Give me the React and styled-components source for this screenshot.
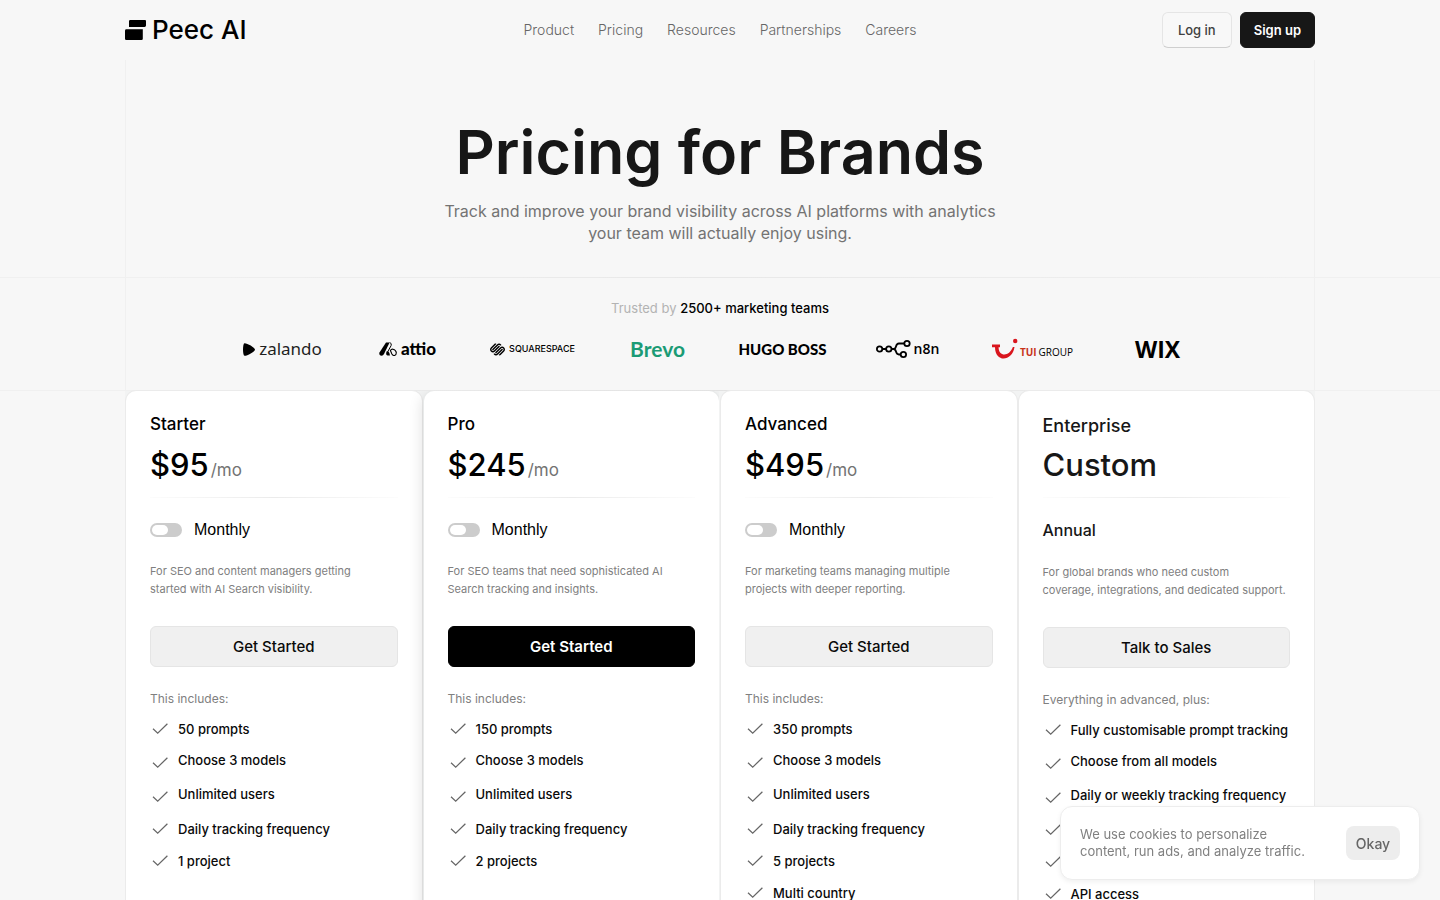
import React from 'react'
import styled, { createGlobalStyle, css } from 'styled-components'
import { SiSquarespace } from 'react-icons/si'

const GlobalStyle = createGlobalStyle`
	* {
		box-sizing: border-box;
	}
	body {
		margin: 0;
		background: #f7f7f7;
		color: #171717;
		font-family: Inter, 'Liberation Sans', sans-serif;
	}
	button {
		font-family: inherit;
		cursor: pointer;
	}
	h1, h2, p, ul {
		margin: 0;
		padding: 0;
		font-weight: inherit;
	}
`

const Page = styled.div`
	height: 100vh;
	overflow: hidden;
`
const Container = styled.div`
	max-width: 1190px;
	margin: 0 auto;
`
const Header = styled(Container)`
	display: grid;
	grid-template-columns: 1fr auto 1fr;
	align-items: center;
	height: 60px;
`
const Brand = styled.a`
	display: flex;
	align-items: center;
	gap: 6px;
	color: #000;
	font-size: 26px;
	font-weight: 500;
	line-height: 32px;
	text-decoration: none;
	white-space: nowrap;
`
const Nav = styled.nav`
	display: flex;
	gap: 24px;
`
const NavLink = styled.a`
	color: #666;
	font-size: 14px;
	font-weight: 300;
	line-height: 20px;
	text-decoration: none;
`
const Actions = styled.div`
	display: flex;
	justify-content: flex-end;
	gap: 8px;
`
const HeaderButton = styled.button`
	height: 36px;
	padding: 0 15px;
	border: 1px solid #e5e5e5;
	border-bottom-color: #cfcfcf;
	border-radius: 6px;
	background: #f8f8f8;
	color: #404040;
	font-size: 13px;
	font-weight: 500;
	${(props) =>
		props.$primary &&
		css`
			padding: 0 13px;
			border-color: #171717;
			background: #171717;
			color: #fff;
			font-weight: 600;
		`}
`
const Frame = styled(Container)`
	border: solid #f0f0f0;
	border-width: 0 1px;
`
const Hero = styled.section`
	padding: 54px 24px 33px;
	text-align: center;
`
const Title = styled.h1`
	color: #171717;
	font-size: 61px;
	font-weight: 600;
	line-height: 76px;
`
const Lead = styled.p`
	margin-top: 10px;
	color: #737373;
	font-size: 16px;
	line-height: 22px;
`
const Rule = styled.hr`
	height: 1px;
	margin: 0;
	border: 0;
	background: linear-gradient(90deg, #f0f0f0 9%, ${(props) => props.$color || '#e8e8e8'} 50%, #f0f0f0 91%);
`
const Trusted = styled.section`
	padding: 19px 0 25px;
	text-align: center;
`
const TrustedText = styled.p`
	color: #b3b3b3;
	font-size: 13px;
	line-height: 22px;
	strong {
		color: #000;
		font-weight: 500;
	}
`
const Logos = styled.div`
	display: grid;
	grid-template-columns: repeat(8, 1fr);
	max-width: 1000px;
	margin: 14px auto 0;
`
const Logo = styled.div`
	display: flex;
	align-items: center;
	justify-content: center;
	gap: ${(props) => props.$gap || 4}px;
	height: 32px;
	color: ${(props) => props.$color || '#000'};
	font-family: ${(props) => props.$font || 'Inter'}, sans-serif;
	font-size: ${(props) => props.$size}px;
	font-weight: ${(props) => props.$weight || 400};
	line-height: 24px;
	white-space: nowrap;
`
const TuiText = styled.span`
	padding-top: 6px;
	b {
		margin-right: 2px;
		color: #c8321a;
	}
`
const Plans = styled(Container)`
	display: grid;
	grid-template-columns: repeat(4, minmax(0, 1fr));
	gap: 2px;
	padding: 0 1px;
	background: #f2f3f3;
`
const Card = styled.article`
	min-height: 600px;
	padding: 21px 24px;
	border-radius: 10px;
	background: #fff;
	box-shadow: ${(props) =>
		props.$featured ? '0 0 0 1px #e8eaea, -2px 4px 14px rgba(0, 0, 0, 0.12)' : '0 0 0 1px #ebebeb'};
	clip-path: ${(props) => (props.$featured ? 'inset(0 0 0 -20px)' : 'none')};
`
const PlanName = styled.h2`
	margin-bottom: ${(props) => (props.$custom ? 2 : 6)}px;
	color: ${(props) => (props.$custom ? '#171717' : '#000')};
	font-size: ${(props) => (props.$custom ? 18 : 17)}px;
	font-weight: 500;
	line-height: ${(props) => (props.$custom ? 28 : 24)}px;
`
const Price = styled.p`
	display: flex;
	align-items: baseline;
	gap: 2px;
	height: 45px;
	margin-bottom: 10px;
	color: ${(props) => (props.$custom ? '#171717' : '#000')};
	font-size: 31px;
	font-weight: 500;
	line-height: 45px;
	span {
		color: #737373;
		font-size: 17px;
		font-weight: 400;
	}
`
const Fade = styled.hr`
	height: 1px;
	margin: 0;
	border: 0;
	background: linear-gradient(90deg, #fcfcfc, #ebebeb 50%, #fcfcfc);
`
const Term = styled.label`
	display: flex;
	align-items: center;
	gap: 12px;
	height: 24px;
	margin: 20px 0;
	color: #000;
	font-family: 'Liberation Sans', sans-serif;
	font-size: 16px;
	${(props) =>
		props.$custom &&
		css`
			margin-bottom: 21px;
			color: #171717;
			font-family: inherit;
			font-weight: 500;
		`}
`
const Switch = styled.input`
	display: flex;
	align-items: center;
	appearance: none;
	width: 32px;
	height: 14px;
	margin: 0;
	padding: 0 2px;
	border-radius: 7px;
	background: #ccc;
	&::before {
		content: '';
		width: 16px;
		height: 10px;
		border-radius: 5px;
		background: #fff;
	}
	&:checked {
		justify-content: flex-end;
		background: #171717;
	}
`
const Description = styled.p`
	margin-bottom: 28px;
	color: #808080;
	font-size: 11px;
	line-height: 18px;
	white-space: nowrap;
`
const PlanButton = styled.button`
	display: block;
	width: 100%;
	height: 41px;
	border: 1px solid #e5e5e5;
	border-radius: 6px;
	background: #f0f0f0;
	color: #0a0a0a;
	font-size: 15px;
	font-weight: 500;
	${(props) =>
		props.$featured &&
		css`
			border-color: #000;
			background: #000;
			color: #fff;
			font-weight: 600;
		`}
`
const Includes = styled.p`
	margin: 22px 0 8px;
	color: #808080;
	font-size: 12px;
	line-height: 20px;
`
const Features = styled.ul`
	display: grid;
	gap: 8px;
	list-style: none;
`
const Feature = styled.li`
	display: flex;
	align-items: flex-start;
	gap: 8px;
	color: #0a0a0a;
	font-size: 13px;
	font-weight: 500;
	line-height: ${(props) => (props.$tall ? 22 : 24)}px;
	white-space: nowrap;
	height: ${(props) => (props.$tall ? 26 : 24)}px;
	svg {
		flex: none;
		align-self: flex-end;
	}
`
const Cookies = styled.aside`
	position: fixed;
	right: 20px;
	bottom: 20px;
	display: flex;
	align-items: center;
	justify-content: space-between;
	width: 360px;
	height: 74px;
	padding: 0 19px;
	border: 1px solid #ededed;
	border-radius: 12px;
	background: #fff;
	color: #808080;
	font-size: 13px;
	line-height: 17px;
	white-space: nowrap;
	box-shadow: 0 2px 5px rgba(0, 0, 0, 0.06);
`
const Okay = styled.button`
	width: 54px;
	height: 34px;
	padding: 0;
	border: 0;
	border-radius: 8px;
	background: #ededed;
	color: #666;
	font-size: 14px;
	font-weight: 500;
`

const Check = () => (
	<svg width='20' height='24' viewBox='0 0 20 24' fill='none' stroke='#666' strokeWidth='1.25'>
		<path d='M3 11.8 7.7 16.2 17.4 6.8' />
	</svg>
)

const Mark = () => (
	<svg width='21' height='20' viewBox='0 0 21 20'>
		<path d='M5.2 0H20Q21 0 21 1V5.6Q21 7 19.6 7H4V1.2Q4 0 5.2 0ZM1.4 9.3H17.8V18.7Q17.8 20 16.5 20H1.3Q0 20 0 18.7V10.7Q0 9.3 1.4 9.3Z' />
	</svg>
)

const ZalandoMark = () => (
	<svg width='12' height='13' viewBox='0 0 12 13'>
		<path d='M1.5.2C.5.3 0 3.2 0 6.5s.5 6.2 1.5 6.3C3.4 13.2 12 8.7 12 6.5S3.4-.2 1.5.2Z' />
	</svg>
)

const AttioMark = () => (
	<svg width='18' height='14' viewBox='0 0 18 14'>
		<path d='M7 .4h3.6L5 12.1q-.8 1.6-2.4 1.6Q0 13.7.3 10.8Z' />
		<path d='M10.6.4q2.5 1 1.5 3.2L8.6 10' fill='none' stroke='#000' strokeWidth='1' />
		<path d='M7.6 9.4q2.8-.4 3.3 4.1H8.5Q6.3 12.9 7.6 9.4Z' />
		<path d='M11.4 8.6q1-1.8 2.6-1.4 3 .8 3.3 3.4.1 2.6-1.8 2.9-1.6.2-2.6-1.6Z' fill='none' stroke='#000' strokeWidth='1.1' />
	</svg>
)

const N8nMark = () => (
	<svg width='35' height='20' viewBox='0 0 35 20' fill='none' stroke='#000' strokeWidth='1.8'>
		<circle cx='3.6' cy='10' r='2.7' />
		<circle cx='12.8' cy='10' r='2.7' />
		<circle cx='31' cy='4.5' r='2.7' />
		<circle cx='27.4' cy='15.5' r='2.7' />
		<path d='M6.3 10h3.8M15.5 10h2c3.6 0 1.3-5.5 5.4-5.5h5.4M17.5 10c3.6 0 1.3 5.5 5.4 5.5h1.8' />
	</svg>
)

const TuiMark = () => (
	<svg width='26' height='22' viewBox='0 0 26 22'>
		<path d='M0 6.6h8v2.6H6.6c-.2 9.2 10.4 10.2 14.3-.2h1.6C20.4 23.6 3.2 25 3 9.2H0Z' fill='#d9161e' />
		<circle cx='23.2' cy='3' r='2.2' fill='#d9161e' />
	</svg>
)

const plans = [
	{
		name: 'Starter',
		price: '$95',
		description: ['For SEO and content managers getting', 'started with AI Search visibility.'],
		features: ['50 prompts', 'Choose 3 models', 'Unlimited users', 'Daily tracking frequency', '1 project'],
	},
	{
		name: 'Pro',
		price: '$245',
		featured: true,
		description: ['For SEO teams that need sophisticated AI', 'Search tracking and insights.'],
		features: ['150 prompts', 'Choose 3 models', 'Unlimited users', 'Daily tracking frequency', '2 projects'],
	},
	{
		name: 'Advanced',
		price: '$495',
		description: ['For marketing teams managing multiple', 'projects with deeper reporting.'],
		features: ['350 prompts', 'Choose 3 models', 'Unlimited users', 'Daily tracking frequency', '5 projects', 'Multi country'],
	},
	{
		name: 'Enterprise',
		custom: true,
		price: 'Custom',
		description: ['For global brands who need custom', 'coverage, integrations, and dedicated support.'],
		features: [
			'Fully customisable prompt tracking',
			'Choose from all models',
			'Daily or weekly tracking frequency',
			'',
			'',
			'API access',
		],
	},
]

const Plan = ({ name, price, description, features, featured, custom }) => (
	<Card $featured={featured}>
		<PlanName $custom={custom}>{name}</PlanName>
		<Price $custom={custom}>
			{price}
			{!custom && <span>/mo</span>}
		</Price>
		<Fade />
		{custom ? (
			<Term as='p' $custom>
				Annual
			</Term>
		) : (
			<Term>
				<Switch type='checkbox' role='switch' />
				Monthly
			</Term>
		)}
		<Description>
			{description[0]}
			<br />
			{description[1]}
		</Description>
		<PlanButton type='button' $featured={featured}>
			{custom ? 'Talk to Sales' : 'Get Started'}
		</PlanButton>
		<Includes>{custom ? 'Everything in advanced, plus:' : 'This includes:'}</Includes>
		<Features>
			{features.map((feature, i) => (
				<Feature key={i} $tall={i === 1 || i === 2}>
					<Check />
					{feature}
				</Feature>
			))}
		</Features>
	</Card>
)

const App = () => (
	<Page>
		<GlobalStyle />
		<Header as='header'>
			<Brand href='#'>
				<Mark />
				Peec AI
			</Brand>
			<Nav>
				{['Product', 'Pricing', 'Resources', 'Partnerships', 'Careers'].map((item) => (
					<NavLink key={item} href='#'>
						{item}
					</NavLink>
				))}
			</Nav>
			<Actions>
				<HeaderButton type='button'>Log in</HeaderButton>
				<HeaderButton type='button' $primary>
					Sign up
				</HeaderButton>
			</Actions>
		</Header>
		<Frame>
			<Hero>
				<Title>Pricing for Brands</Title>
				<Lead>
					Track and improve your brand visibility across AI platforms with analytics
					<br />
					your team will actually enjoy using.
				</Lead>
			</Hero>
		</Frame>
		<Rule />
		<Frame>
			<Trusted>
				<TrustedText>
					Trusted by <strong>2500+ marketing teams</strong>
				</TrustedText>
				<Logos>
					<Logo $font='Noto Sans' $size={17} $color='#1f1f1f'>
						<ZalandoMark />
						zalando
					</Logo>
					<Logo $font='Lato' $size={17} $weight={900}>
						<AttioMark />
						attio
					</Logo>
					<Logo $size={9} $weight={500}>
						<SiSquarespace size={15} />
						SQUARESPACE
					</Logo>
					<Logo $font='Lato' $size={21} $weight={700} $color='#1b9b75'>
						Brevo
					</Logo>
					<Logo $font='Lato' $size={15} $weight={900}>
						HUGO BOSS
					</Logo>
					<Logo $font='Open Sans' $size={14} $weight={600} $gap={3}>
						<N8nMark />
						n8n
					</Logo>
					<Logo $font='Open Sans' $size={10} $gap={2}>
						<TuiMark />
						<TuiText>
							<b>TUI</b>GROUP
						</TuiText>
					</Logo>
					<Logo $font='Open Sans' $size={23} $weight={700}>
						WIX
					</Logo>
				</Logos>
			</Trusted>
		</Frame>
		<Rule $color='#e2e2e2' />
		<Plans as='main'>
			{plans.map((plan) => (
				<Plan key={plan.name} {...plan} />
			))}
		</Plans>
		<Cookies>
			<p>
				We use cookies to personalize
				<br />
				content, run ads, and analyze traffic.
			</p>
			<Okay type='button'>Okay</Okay>
		</Cookies>
	</Page>
)

export default App
